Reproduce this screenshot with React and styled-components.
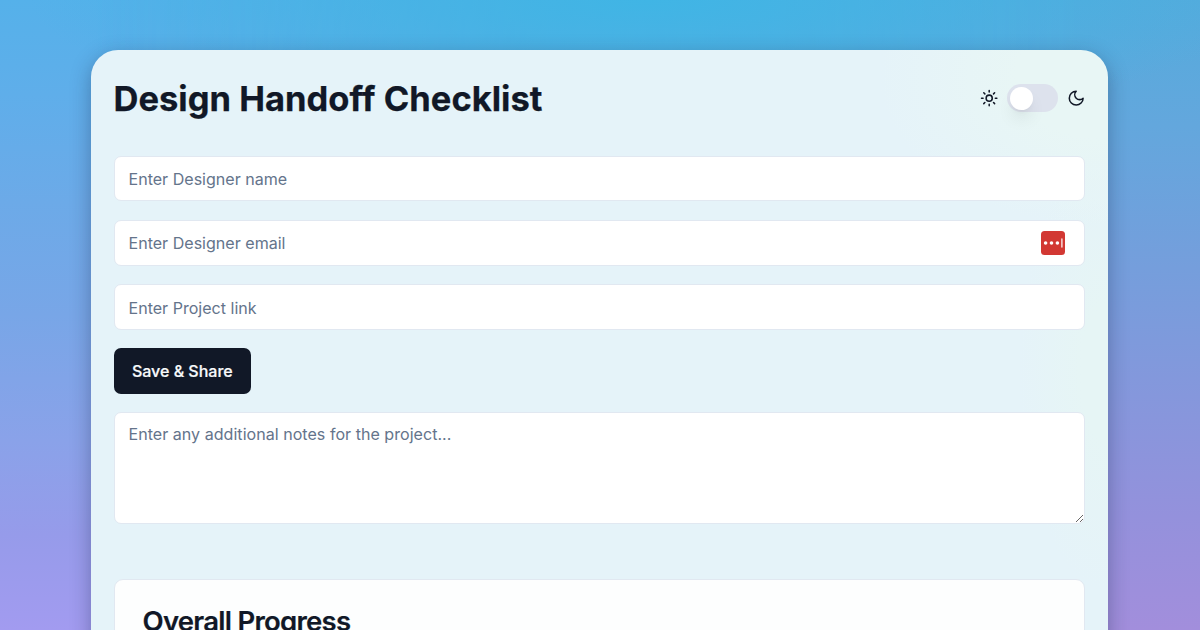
import React from "react";
import styled, { createGlobalStyle } from "styled-components";

const GlobalStyle = createGlobalStyle`
  * { box-sizing: border-box; }
  html, body { margin: 0; height: 630px; overflow: hidden; }
  body {
    font-family: Inter, "Liberation Sans", sans-serif;
    color: #111827;
    -webkit-font-smoothing: antialiased;
  }
`;

const Page = styled.div`
  position: relative;
  isolation: isolate;
  height: 630px;
  overflow: hidden;
  padding: 50px 92px 0 91px;
  background: linear-gradient(180deg, #55b1ea 0%, #5faeea 15%, #6caae8 32%, #78a6e7 50%, #8aa2e9 70%, #969bea 85%, #a29bf0 100%);

  &::before, &::after {
    content: "";
    position: absolute;
    inset: 0;
    z-index: -1;
  }
  &::before {
    background: linear-gradient(180deg, #54abdc 0%, #63a7dd 20%, #739fdc 40%, #8398dc 60%, #9491dc 82%, #a28edc 100%);
    mask-image: linear-gradient(90deg, transparent 8%, #000 90%);
  }
  &::after {
    background: radial-gradient(ellipse 620px 130px at 54% 0, rgba(64, 181, 229, 1), rgba(64, 181, 229, 0));
  }
`;

const Panel = styled.main`
  height: 700px;
  padding: 22px 23px 0 22.5px;
  border-radius: 27px;
  background:
    radial-gradient(ellipse 230px 150px at 100% 4%, #e8f6f5 40%, rgba(232, 246, 245, 0)),
    radial-gradient(ellipse 90px 220px at 100% 46%, #e6f5f5 30%, rgba(230, 245, 245, 0)),
    #e5f3f9;
  box-shadow: 0 6px 20px rgba(25, 35, 70, 0.36);
`;

const Header = styled.header`
  display: flex;
  align-items: center;
  justify-content: space-between;
  height: 52px;
  margin-bottom: 31.5px;
`;

const Title = styled.h1`
  margin: 0;
  padding-top: 1px;
  font-size: 34.5px;
  line-height: 46px;
  font-weight: 700;
  letter-spacing: 0.02px;
  -webkit-text-stroke: 0.25px currentColor;
  white-space: nowrap;
`;

const ThemeControl = styled.div`
  display: flex;
  align-items: center;
  gap: 9px;
`;

const Icon = styled.svg`
  display: block;
  width: 18.4px;
  height: 18.4px;
  fill: none;
  stroke: currentColor;
  stroke-width: 2;
  stroke-linecap: round;
  stroke-linejoin: round;
`;

const Switch = styled.button`
  display: flex;
  align-items: center;
  width: 50.5px;
  height: 28px;
  padding: 0 2.9px;
  border: 0;
  border-radius: 14px;
  background: #dde2ed;
`;

const Thumb = styled.span`
  width: 23px;
  height: 23px;
  border-radius: 50%;
  background: #fff;
  box-shadow: 0 11px 17px -3px rgba(0, 0, 0, 0.1), 0 4px 7px -4px rgba(0, 0, 0, 0.1);
`;

const Form = styled.form`
  display: flex;
  flex-direction: column;
  align-items: flex-start;
  gap: 18.3px;
`;

const Field = styled.div`
  display: flex;
  align-items: center;
  width: 100%;
  height: 45.9px;
  padding: 0 19px 0 14px;
  border: 1px solid #e1e8f1;
  border-radius: 7px;
  background: #fff;
`;

const Input = styled.input`
  flex: 1;
  min-width: 0;
  height: 100%;
  padding: 1.4px 0 0;
  border: 0;
  outline: 0;
  background: transparent;
  font: 400 16.07px/23px Inter, sans-serif;
  &::placeholder { color: #64748b; opacity: 1; }
`;

const SaveButton = styled.button`
  height: 45.9px;
  width: 137.6px;
  padding: 1px 0 0;
  border: 0;
  border-radius: 7px;
  background: #111827;
  color: #f8fafc;
  font: 500 16.07px/23px Inter, sans-serif;
  letter-spacing: -0.04px;
  -webkit-text-stroke: 0.2px currentColor;
  white-space: nowrap;
`;

const Notes = styled.textarea`
  display: block;
  width: 100%;
  height: 112px;
  padding: 9.5px 14px;
  border: 1px solid #e1e8f1;
  border-radius: 7px;
  outline: 0;
  background: #fff;
  font: 400 16.07px/23px Inter, sans-serif;
  letter-spacing: 0.02px;
  resize: vertical;
  &::placeholder { color: #64748b; opacity: 1; }
`;

const Card = styled.section`
  height: 160px;
  margin-top: 55px;
  padding: 22.5px 28px;
  border: 1px solid #e1e8f1;
  border-radius: 9px;
  background: #fdfefe;
`;

const CardTitle = styled.h2`
  margin: 0;
  font-size: 27.5px;
  line-height: 37px;
  font-weight: 600;
  letter-spacing: -0.74px;
  -webkit-text-stroke: 0.2px currentColor;
`;

const Sun = () => (
  <Icon viewBox="0 0 24 24">
    <circle cx="12" cy="12" r="4" />
    <path d="M12 2v2M12 20v2M4.93 4.93l1.41 1.41M17.66 17.66l1.41 1.41M2 12h2M20 12h2M6.34 17.66l-1.41 1.41M19.07 4.93l-1.41 1.41" />
  </Icon>
);

const Moon = () => (
  <Icon viewBox="0 0 24 24">
    <path d="M12 3a6 6 0 0 0 9 9 9 9 0 1 1-9-9Z" />
  </Icon>
);

const PasswordBadge = styled.svg`
  display: block;
  flex: none;
  width: 24px;
  height: 24px;
`;

export default function App() {
  return (
    <Page>
      <GlobalStyle />
      <Panel>
        <Header>
          <Title>Design Handoff Checklist</Title>
          <ThemeControl>
            <Sun />
            <Switch type="button" role="switch" aria-checked="false" aria-label="Dark mode">
              <Thumb />
            </Switch>
            <Moon />
          </ThemeControl>
        </Header>
        <Form>
          <Field><Input placeholder="Enter Designer name" /></Field>
          <Field>
            <Input placeholder="Enter Designer email" />
            <PasswordBadge viewBox="0 0 24 24">
              <rect width="24" height="24" rx="3.5" fill="#d23833" />
              <circle cx="4.6" cy="12" r="1.8" fill="#fff" />
              <circle cx="10.5" cy="12" r="1.8" fill="#fff" />
              <circle cx="16.4" cy="12" r="1.8" fill="#fff" />
              <rect x="20.3" y="7.3" width="1.2" height="9.4" rx=".6" fill="#fff" />
            </PasswordBadge>
          </Field>
          <Field><Input placeholder="Enter Project link" /></Field>
          <SaveButton type="button">Save &amp; Share</SaveButton>
          <Notes placeholder="Enter any additional notes for the project..." />
        </Form>
        <Card>
          <CardTitle>Overall Progress</CardTitle>
        </Card>
      </Panel>
    </Page>
  );
}
